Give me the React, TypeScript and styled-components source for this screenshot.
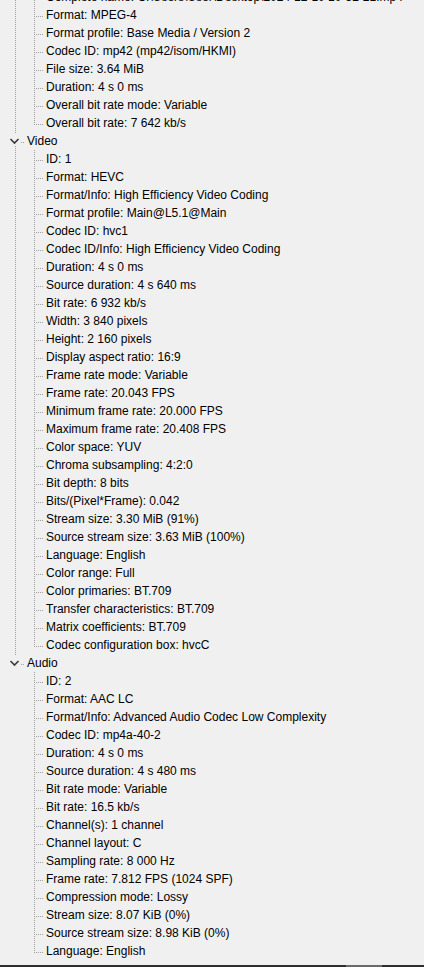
import React from "react";
import styled, { createGlobalStyle, css } from "styled-components";

interface Section {
  name: string;
  items: string[];
}

const general: Section = {
  name: "General",
  items: [
    "Complete name: C:\\Users\\User\\Desktop\\2024-12-10 10-52-21.mp4",
    "Format: MPEG-4",
    "Format profile: Base Media / Version 2",
    "Codec ID: mp42 (mp42/isom/HKMI)",
    "File size: 3.64 MiB",
    "Duration: 4 s 0 ms",
    "Overall bit rate mode: Variable",
    "Overall bit rate: 7 642 kb/s",
  ],
};

const sections: Section[] = [
  {
    name: "Video",
    items: [
      "ID: 1",
      "Format: HEVC",
      "Format/Info: High Efficiency Video Coding",
      "Format profile: Main@L5.1@Main",
      "Codec ID: hvc1",
      "Codec ID/Info: High Efficiency Video Coding",
      "Duration: 4 s 0 ms",
      "Source duration: 4 s 640 ms",
      "Bit rate: 6 932 kb/s",
      "Width: 3 840 pixels",
      "Height: 2 160 pixels",
      "Display aspect ratio: 16:9",
      "Frame rate mode: Variable",
      "Frame rate: 20.043 FPS",
      "Minimum frame rate: 20.000 FPS",
      "Maximum frame rate: 20.408 FPS",
      "Color space: YUV",
      "Chroma subsampling: 4:2:0",
      "Bit depth: 8 bits",
      "Bits/(Pixel*Frame): 0.042",
      "Stream size: 3.30 MiB (91%)",
      "Source stream size: 3.63 MiB (100%)",
      "Language: English",
      "Color range: Full",
      "Color primaries: BT.709",
      "Transfer characteristics: BT.709",
      "Matrix coefficients: BT.709",
      "Codec configuration box: hvcC",
    ],
  },
  {
    name: "Audio",
    items: [
      "ID: 2",
      "Format: AAC LC",
      "Format/Info: Advanced Audio Codec Low Complexity",
      "Codec ID: mp4a-40-2",
      "Duration: 4 s 0 ms",
      "Source duration: 4 s 480 ms",
      "Bit rate mode: Variable",
      "Bit rate: 16.5 kb/s",
      "Channel(s): 1 channel",
      "Channel layout: C",
      "Sampling rate: 8 000 Hz",
      "Frame rate: 7.812 FPS (1024 SPF)",
      "Compression mode: Lossy",
      "Stream size: 8.07 KiB (0%)",
      "Source stream size: 8.98 KiB (0%)",
      "Language: English",
    ],
  },
];

const Chevron = () => (
  <svg width="13" height="13" viewBox="0 0 13 13">
    <polyline
      points="2.5,6 6.5,10 10.5,6"
      fill="none"
      stroke="#3a3a3a"
      strokeWidth="1.6"
    />
  </svg>
);

const ChildRows: React.FC<{ items: string[]; rootGoesOn: boolean }> = ({
  items,
  rootGoesOn,
}) => (
  <>
    {items.map((text, i) => (
      <Row key={text + i}>
        <RootGutter $line={rootGoesOn} />
        <BranchGutter $last={i === items.length - 1} />
        <Label>{text}</Label>
      </Row>
    ))}
  </>
);

const App: React.FC = () => {
  return (
    <>
      <GlobalStyle />
      <Window>
        <TreeArea>
          <TreeScroll>
            <ChildRows items={general.items} rootGoesOn />
            {sections.map((section, i) => {
              const last = i === sections.length - 1;
              return (
                <React.Fragment key={section.name}>
                  <Row>
                    <HeaderGutter $last={last}>
                      <Toggle>
                        <Chevron />
                      </Toggle>
                    </HeaderGutter>
                    <Label>{section.name}</Label>
                  </Row>
                  <ChildRows items={section.items} rootGoesOn={!last} />
                </React.Fragment>
              );
            })}
          </TreeScroll>
        </TreeArea>
        <BottomBar>
          <BarThumb />
        </BottomBar>
      </Window>
    </>
  );
};

export default App;

const GlobalStyle = createGlobalStyle`
  html, body {
    margin: 0;
    padding: 0;
    background: #f0f0f0;
  }
  body {
    font-family: "Liberation Sans", Arial, sans-serif;
    font-size: 12px;
    color: #000;
  }
`;

// dotted tree guides, drawn as background layers
const vDots = "repeating-linear-gradient(to bottom, #a0a0a0 0 1px, transparent 1px 2px)";
const hDots = "repeating-linear-gradient(to right, transparent 0 1px, #a0a0a0 1px 2px)";

const Window = styled.div`
  height: 967px;
  display: flex;
  flex-direction: column;
  overflow: hidden;
  background: #f0f0f0;
`;

const TreeArea = styled.div`
  flex: 1;
  overflow: hidden;
`;

const TreeScroll = styled.div`
  display: flex;
  flex-direction: column;
  margin-top: -12px;
`;

const Row = styled.div`
  display: flex;
  height: 18px;
  white-space: nowrap;
`;

const Label = styled.span`
  line-height: 18px;
`;

const RootGutter = styled.span<{ $line: boolean }>`
  flex: 0 0 20px;
  ${(p) =>
    p.$line &&
    css`
      background: ${vDots} 15px 0 / 1px 18px no-repeat;
    `}
`;

const BranchGutter = styled.span<{ $last: boolean }>`
  flex: 0 0 26px;
  background:
    ${vDots} 14px 0 / 1px ${(p) => (p.$last ? 11 : 18)}px no-repeat,
    ${hDots} 15px 10px / 8px 1px no-repeat;
`;

const HeaderGutter = styled.span<{ $last: boolean }>`
  flex: 0 0 27px;
  display: flex;
  align-items: flex-start;
  padding: 1px 0 0 8px;
  box-sizing: border-box;
  background:
    ${vDots} 15px 0 / 1px ${(p) => (p.$last ? 11 : 18)}px no-repeat,
    ${hDots} 16px 10px / 8px 1px no-repeat;
`;

const Toggle = styled.span`
  display: flex;
  width: 13px;
  height: 13px;
  background: #f0f0f0;
`;

const BottomBar = styled.div`
  display: flex;
  flex: 0 0 2px;
  padding-left: 346px;
  background: #2e2e2e;
`;

const BarThumb = styled.div`
  width: 36px;
  background: #6a6a6a;
`;
